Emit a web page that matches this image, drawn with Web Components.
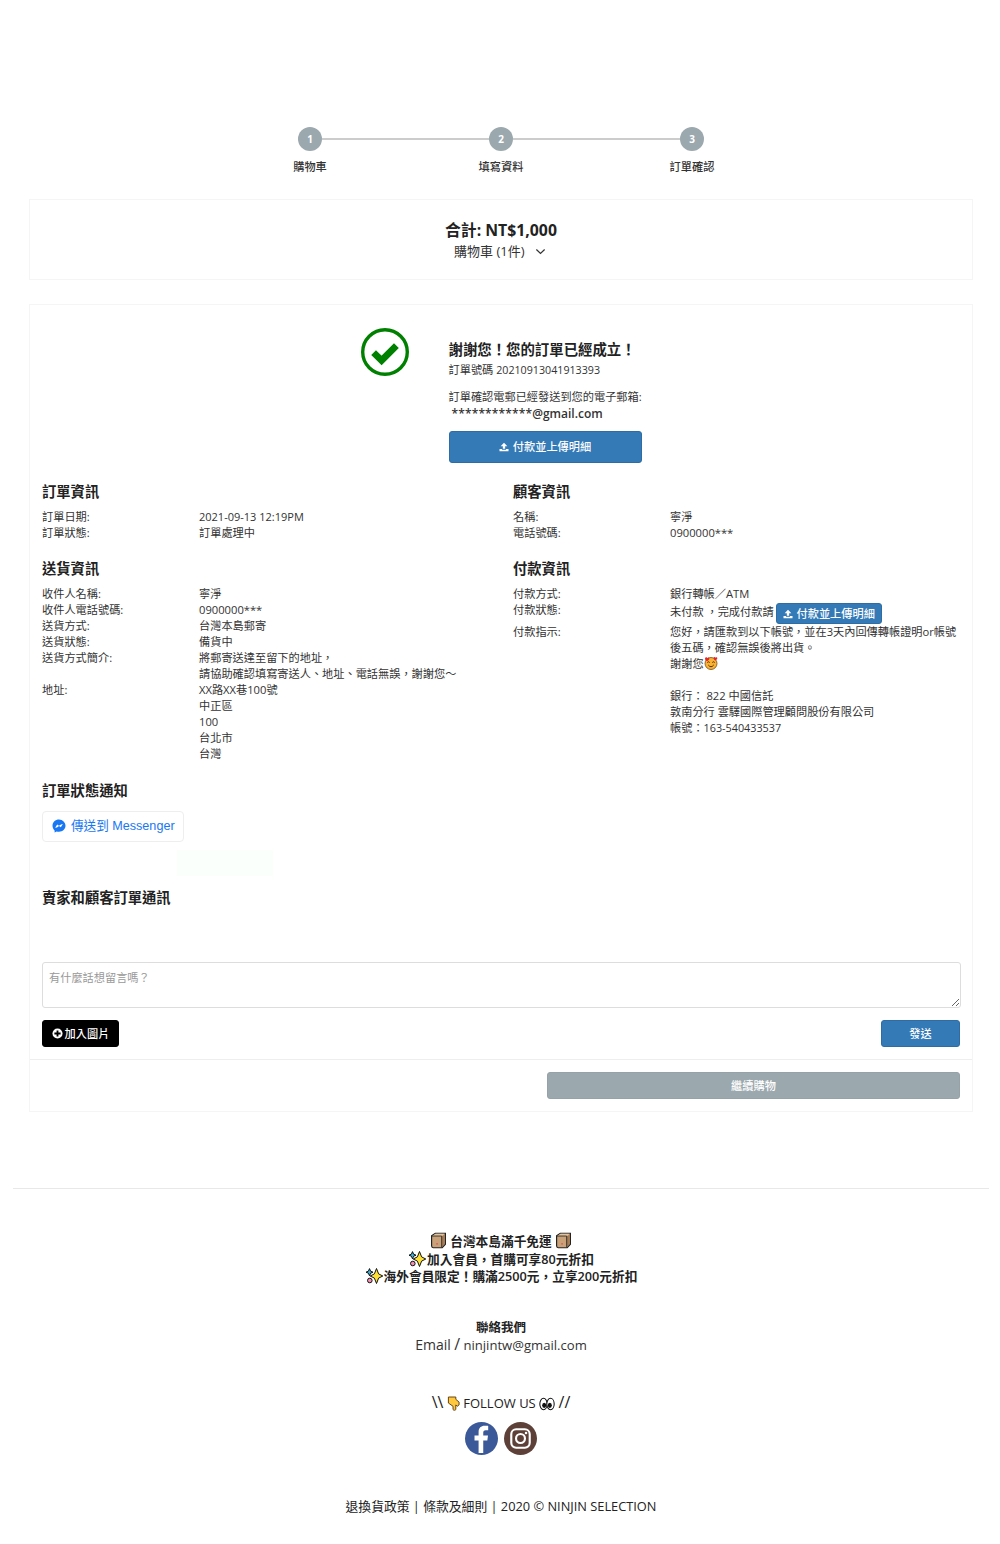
<!DOCTYPE html>
<html lang="zh-Hant">
<head>
<meta charset="utf-8">
<title>訂單確認</title>
<style>
  html, body { margin: 0; background: #fff; }
  body { font: 11.2px/16px "Open Sans", "Noto Sans CJK TC", sans-serif; color: #333; }
  .page { width: 944px; margin-left: 29px; }
  .spacer-foot { height: 76px; }
  .mid { height: 24px; }
  .latin { font-size: 11px; }
  .digits { font-size: 10.8px; }
</style>
</head>
<body>
<div class="page">
  <step-bar>
    <step-dot slot="dots" num="1"></step-dot>
    <step-dot slot="dots" num="2"></step-dot>
    <step-dot slot="dots" num="3"></step-dot>
    <span slot="labels">購物車</span>
    <span slot="labels">填寫資料</span>
    <span slot="labels">訂單確認</span>
  </step-bar>
  <cart-total></cart-total>
  <div class="mid"></div>
  <order-panel>
    <order-hero></order-hero>
    <info-grid>
      <info-block heading="訂單資訊">
        <info-row label="訂單日期:"><span class="latin">2021-09-13 12:19PM</span></info-row>
        <info-row label="訂單狀態:">訂單處理中</info-row>
      </info-block>
      <info-block heading="顧客資訊">
        <info-row label="名稱:">寧淨</info-row>
        <info-row label="電話號碼:">0900000***</info-row>
      </info-block>
      <info-block heading="送貨資訊">
        <info-row label="收件人名稱:">寧淨</info-row>
        <info-row label="收件人電話號碼:">0900000***</info-row>
        <info-row label="送貨方式:">台灣本島郵寄</info-row>
        <info-row label="送貨狀態:">備貨中</info-row>
        <info-row label="送貨方式簡介:">將郵寄送達至留下的地址，<br>請協助確認填寫寄送人、地址、電話無誤，謝謝您～</info-row>
        <info-row label="地址:">XX路XX巷100號<br>中正區<br>100<br>台北市<br>台灣</info-row>
      </info-block>
      <info-block heading="付款資訊">
        <info-row label="付款方式:">銀行轉帳／ATM</info-row>
        <info-row label="付款狀態:" tall>未付款 ，完成付款請 <app-button kind="blue" size="inline"><svg-icon name="upload" size="10"></svg-icon>付款並上傳明細</app-button></info-row>
        <info-row label="付款指示:">您好，請匯款到以下帳號，並在3天內回傳轉帳證明or帳號<br>後五碼，確認無誤後將出貨。<br>謝謝您<svg-icon name="hearts" size="14"></svg-icon><br><br>銀行： 822 中國信託<br>敦南分行 雲驛國際管理顧問股份有限公司<br>帳號：<span class="digits">163-540433537</span></info-row>
      </info-block>
    </info-grid>
    <notify-section></notify-section>
    <message-form></message-form>
    <panel-foot slot="foot"></panel-foot>
  </order-panel>
  <div class="spacer-foot"></div>
</div>
<site-footer></site-footer>

<script>
const fontStack = '"Open Sans", "Noto Sans CJK TC", sans-serif';

const icons = {
  upload: '<svg viewBox="0 0 12 12" width="100%" height="100%"><path fill="currentColor" d="M6 .8 10 5H7.400V8.200H4.600V5H2ZM.6 8.400H3.600V9.400H8.400V8.400H11.400V11.200H.6Z"/></svg>',
  plus: '<svg viewBox="0 0 12 12" width="100%" height="100%"><circle cx="6" cy="6" r="5.500" fill="currentColor"/><path fill="#000" d="M5 2.600H7V5H9.400V7H7V9.400H5V7H2.600V5H5Z"/></svg>',
  chevron: '<svg viewBox="0 0 12 12" width="100%" height="100%"><path fill="none" stroke="currentColor" stroke-width="1.300" d="M1.500 3.800 6 8.200 10.500 3.800"/></svg>',
  check: '<svg viewBox="0 0 48 48" width="100%" height="100%"><circle cx="24" cy="24" r="22.300" fill="none" stroke="#008000" stroke-width="3.400"/><path fill="none" stroke="#008000" stroke-width="6.800" d="M12.600 24.600 20.600 32.400 35.400 17.600"/></svg>',
  messenger: '<svg viewBox="0 0 14 14" width="100%" height="100%"><path fill="#1877f2" d="M7 .5C3.300.5.500 3.200.500 6.800c0 1.900.8 3.500 2.100 4.600v2.100l2-1.100c.7.2 1.500.3 2.400.3 3.700 0 6.500-2.700 6.500-5.900S10.700.5 7 .5Z"/><path fill="#fff" d="M3.100 8.700 5.200 5.400 7 6.800 9 5.400 10.900 5.100 8.800 8.300 7 7 5 8.400Z"/></svg>',
  box: '<svg viewBox="0 0 16 16" width="100%" height="100%"><path fill="#c9a27a" stroke="#222" stroke-width="1.100" d="M1.500 3.500 5 1.200H14.500V11.500L11.500 14.800H3C2 14.800 1.500 14 1.500 13Z"/><path fill="#e2c4a0" d="M2 3.700 5.200 1.700H13.800L10.800 3.900Z"/><path fill="#a67c55" d="M11 4.500 14 2V11.300L11 14.300Z"/><path fill="none" stroke="#222" stroke-width=".8" d="M1.800 3.800H11V14.500"/><rect x="6" y="10.500" width="1.300" height="1.300" fill="#d94a5a"/></svg>',
  sparkle: '<svg viewBox="0 0 18 16" width="100%" height="100%"><path fill="#ffe135" stroke="#111" stroke-width="1" d="M11.500 .5 13.600 5.900 17.800 8 13.600 10.100 11.500 15.500 9.400 10.100 5.200 8 9.400 5.900Z"/><path fill="#3fb3d9" stroke="#111" stroke-width="1" d="M4.500.6 5.600 3.200 8 4.200 5.600 5.200 4.500 7.800 3.400 5.200 1 4.200 3.400 3.200Z"/><circle cx="4.800" cy="12.500" r="2.300" fill="#f48fb1" stroke="#111" stroke-width="1"/></svg>',
  hand: '<svg viewBox="0 0 14 16" width="100%" height="100%"><path fill="#ffc83d" stroke="#5b3a10" stroke-width="1" d="M1.500 1H9.500V3.500L13 6.500V9.500L11 11 9.500 9.500V14.500C9 15.500 7 15.500 6.500 14.500V11L1.500 7.500Z"/></svg>',
  eyes: '<svg viewBox="0 0 18 16" width="100%" height="100%"><ellipse cx="5" cy="8" rx="4.200" ry="6.500" fill="#fff" stroke="#111" stroke-width="1.200"/><ellipse cx="13" cy="8" rx="4.200" ry="6.500" fill="#fff" stroke="#111" stroke-width="1.200"/><ellipse cx="5.800" cy="9.500" rx="2.300" ry="3" fill="#111"/><ellipse cx="12.200" cy="9.500" rx="2.300" ry="3" fill="#111"/></svg>',
  hearts: '<svg viewBox="0 0 14 14" width="100%" height="100%"><circle cx="7" cy="7.500" r="6" fill="#f9b233" stroke="#7a4a12" stroke-width=".8"/><path fill="none" stroke="#4a2c0a" stroke-width="1" d="M3.300 6.500Q4.500 5 5.700 6.500M8.300 6.500Q9.500 5 10.700 6.500M4.300 9Q7 12.500 9.700 9"/><path fill="#e5252a" d="M1 2.500C1.500.8 3.200 1 3.400 2.300 3.800 1 5.500 1.200 5.300 3 5 4 3.800 4.800 3.200 5.200 2 4.700 1 3.800 1 2.500ZM9.500 2C9.800.8 11.300.8 11.500 1.800 12 .9 13.500 1.200 13.300 2.600 13 3.500 12 4.200 11.400 4.500 10.500 4 9.500 3.200 9.500 2Z"/></svg>',
  facebook: '<svg viewBox="0 0 34 34" width="100%" height="100%"><circle cx="17" cy="17" r="17" fill="#3b5998"/><path fill="#fff" d="M18.800 32V19H23L23.700 14H18.800V11C18.800 9.500 19.400 8.500 21.300 8.500H23.900V4.100C23.400 4 21.900 3.900 20.200 3.900 16.500 3.900 14 6.100 14 10.300V14H9.800V19H14V32Z"/></svg>',
  instagram: '<svg viewBox="0 0 34 34" width="100%" height="100%"><circle cx="17" cy="17" r="17" fill="#5d4037"/><rect x="7.500" y="7.500" width="19" height="19" rx="5" fill="none" stroke="#fff" stroke-width="2.200"/><circle cx="17" cy="17" r="4.600" fill="none" stroke="#fff" stroke-width="2.200"/><circle cx="22.700" cy="11.300" r="1.300" fill="#fff"/></svg>'
};

class SvgIcon extends HTMLElement {
  constructor() {
    super();
    this.attachShadow({ mode: "open" });
  }
  connectedCallback() {
    const size = this.getAttribute("size") || 12;
    const width = this.getAttribute("width") || size;
    this.shadowRoot.innerHTML = `<style>
      :host { display: inline-block; width: ${width}px; height: ${size}px; vertical-align: -2px; }
      svg { display: block; }
    </style>` + icons[this.getAttribute("name")];
  }
}
customElements.define("svg-icon", SvgIcon);

class StepDot extends HTMLElement {
  constructor() {
    super();
    this.attachShadow({ mode: "open" });
    this.shadowRoot.innerHTML = `<style>
      :host { display: flex; align-items: center; justify-content: center; width: 24px; height: 24px;
        border-radius: 50%; background: #9ba8ae; color: #fff; font: 700 10px/24px ${fontStack}; flex: none; }
    </style><span></span>`;
  }
  connectedCallback() {
    this.shadowRoot.querySelector("span").textContent = this.getAttribute("num");
  }
}
customElements.define("step-dot", StepDot);

class StepBar extends HTMLElement {
  constructor() {
    super();
    this.attachShadow({ mode: "open" });
    this.shadowRoot.innerHTML = `<style>
      :host { display: block; padding: 127px 0 24px; }
      .dots { display: flex; width: 406px; margin-left: 269px; }
      .line { flex: 1; height: 2px; background: #ccc; align-self: center; }
      .labels { display: grid; grid-template-columns: repeat(3, 84px); justify-content: space-between;
        width: 466px; margin: 0 0 0 239px; padding-top: 8px; text-align: center;
        font: 500 11.200px/16px ${fontStack}; color: #333; }
    </style>
    <div class="dots"></div>
    <div class="labels"><slot name="labels"></slot></div>`;
  }
  connectedCallback() {
    // put a connecting line between the dots
    const dots = [...this.querySelectorAll("step-dot")];
    const box = this.shadowRoot.querySelector(".dots");
    dots.forEach((dot, i) => {
      const s = document.createElement("slot");
      s.name = "dot" + i;
      dot.slot = "dot" + i;
      box.appendChild(s);
      if (i < dots.length - 1) {
        const line = document.createElement("div");
        line.className = "line";
        box.appendChild(line);
      }
    });
  }
}
customElements.define("step-bar", StepBar);

class CartTotal extends HTMLElement {
  constructor() {
    super();
    this.attachShadow({ mode: "open" });
    this.shadowRoot.innerHTML = `<style>
      :host { display: block; border: 1px solid #f5f5f5; height: 79px; text-align: center; color: #222; }
      .sum { font: 700 15.800px/22px ${fontStack}; padding-top: 19px; }
      .cart { font: 400 13px/20px ${fontStack}; color: #333; padding-right: 2px; }
      svg-icon { margin-left: 7px; color: #333; vertical-align: -1px; }
    </style>
    <div class="sum">合計: NT$1,000</div>
    <div class="cart">購物車 (1件) <svg-icon name="chevron" size="11"></svg-icon></div>`;
  }
}
customElements.define("cart-total", CartTotal);

class OrderPanel extends HTMLElement {
  constructor() {
    super();
    this.attachShadow({ mode: "open" });
    this.shadowRoot.innerHTML = `<style>
      :host { display: block; border: 1px solid #f5f5f5; }
      .body { padding: 23px 12px 12px; }
    </style>
    <div class="body"><slot></slot></div>
    <slot name="foot"></slot>`;
  }
}
customElements.define("order-panel", OrderPanel);

class AppButton extends HTMLElement {
  constructor() {
    super();
    this.attachShadow({ mode: "open" });
    this.shadowRoot.innerHTML = `<style>
      :host { display: inline-flex; align-items: center; justify-content: center; gap: 4px; box-sizing: border-box;
        border: 1px solid transparent; border-radius: 3px; color: #fff; height: 27px;
        font: 500 11.200px/16px ${fontStack}; }
      :host([kind=blue]) { background: #337ab7; border-color: #2e6da4; }
      :host([kind=black]) { background: #000; border-color: #000; }
      :host([kind=gray]) { background: #9ba8ad; border-color: #95a2a7; }
      :host([size=inline]) { height: 21px; margin: -1px 0 0 -1px; padding: 0 6px; vertical-align: top; }
      :host([size=wide]) { display: flex; width: 100%; height: 32px; }
    </style><slot></slot>`;
  }
}
customElements.define("app-button", AppButton);

class OrderHero extends HTMLElement {
  constructor() {
    super();
    this.attachShadow({ mode: "open" });
    this.shadowRoot.innerHTML = `<style>
      :host { display: flex; justify-content: center; gap: 40px; }
      .check { width: 48px; height: 48px; }
      .text { width: 193px; padding-top: 12px; }
      h2 { margin: 0 0 2px; font: 700 14.400px/20px ${fontStack}; color: #222; white-space: nowrap; }
      p { margin: 0; font: 400 11.200px/16px ${fontStack}; white-space: nowrap; }
      .num { font-size: 10.700px; }
      .mail { font-weight: 600; font-size: 12px; padding-left: 3px; margin-top: 1px; color: #333; }
      .stars { letter-spacing: .15px; }
      .gap { height: 11px; }
      app-button { margin-top: 9px; }
    </style>
    <svg-icon class="check" name="check" size="48"></svg-icon>
    <div class="text">
      <h2>謝謝您！您的訂單已經成立！</h2>
      <p>訂單號碼 <span class="num">20210913041913393</span></p>
      <div class="gap"></div>
      <p>訂單確認電郵已經發送到您的電子郵箱:</p>
      <p class="mail"><span class="stars">************</span>@gmail.com</p>
      <app-button kind="blue" size="wide"><svg-icon name="upload" size="10"></svg-icon>付款並上傳明細</app-button>
    </div>`;
  }
}
customElements.define("order-hero", OrderHero);

class InfoGrid extends HTMLElement {
  constructor() {
    super();
    this.attachShadow({ mode: "open" });
    this.shadowRoot.innerHTML = `<style>
      :host { display: grid; grid-template-columns: 447px 447px; column-gap: 24px; row-gap: 18px; margin-top: 19px; }
    </style><slot></slot>`;
  }
}
customElements.define("info-grid", InfoGrid);

class InfoBlock extends HTMLElement {
  constructor() {
    super();
    this.attachShadow({ mode: "open" });
    this.shadowRoot.innerHTML = `<style>
      :host { display: block; }
      h3 { margin: 0 0 7px; font: 700 14.300px/20px ${fontStack}; color: #222; }
    </style><h3></h3><slot></slot>`;
  }
  connectedCallback() {
    this.shadowRoot.querySelector("h3").textContent = this.getAttribute("heading");
  }
}
customElements.define("info-block", InfoBlock);

class InfoRow extends HTMLElement {
  constructor() {
    super();
    this.attachShadow({ mode: "open" });
    this.shadowRoot.innerHTML = `<style>
      :host { display: grid; grid-template-columns: 157px 1fr; font: 400 11.200px/16px ${fontStack}; color: #333; }
      :host([tall]) { height: 22px; }
      .val { white-space: nowrap; }
      :host([tall]) .val { margin-top: 2px; }
    </style><div class="lab"></div><div class="val"><slot></slot></div>`;
  }
  connectedCallback() {
    this.shadowRoot.querySelector(".lab").textContent = this.getAttribute("label");
  }
}
customElements.define("info-row", InfoRow);

class NotifySection extends HTMLElement {
  constructor() {
    super();
    this.attachShadow({ mode: "open" });
    this.shadowRoot.innerHTML = `<style>
      :host { display: block; margin-top: 19px; }
      h3 { margin: 0; font: 700 14.300px/20px ${fontStack}; color: #222; }
      .msg { display: inline-flex; align-items: center; gap: 5px; box-sizing: border-box; height: 31px; margin-top: 10px; padding: 0 8px 2px 9px;
        border: 1px solid #eee; border-radius: 4px; color: #1877f2;
        font: 400 12.600px/16px "Liberation Sans", "Noto Sans CJK TC", sans-serif; vertical-align: top; }
      .tint { width: 96px; height: 26px; margin: 8px 0 0 135px; background: #fbfffb; }
      h3.next { margin-top: 12px; }
      svg-icon { vertical-align: middle; }
    </style>
    <h3>訂單狀態通知</h3>
    <div class="msg"><svg-icon name="messenger" size="14"></svg-icon>傳送到 Messenger</div>
    <div class="tint"></div>
    <h3 class="next">賣家和顧客訂單通訊</h3>`;
  }
}
customElements.define("notify-section", NotifySection);

class MessageForm extends HTMLElement {
  constructor() {
    super();
    this.attachShadow({ mode: "open" });
    this.shadowRoot.innerHTML = `<style>
      :host { display: block; margin-top: 54px; }
      textarea { display: block; box-sizing: border-box; width: 919px; height: 46px; padding: 7px 6px; margin: 0;
        border: 1px solid #ddd; border-radius: 3px; outline: 0; background: #fff;
        font: 400 11.200px/16px ${fontStack}; color: #333; }
      textarea::placeholder { color: #999; }
      .row { display: flex; justify-content: space-between; margin-top: 12px; }
      .add { width: 77px; gap: 2px; }
      .send { width: 79px; }
      svg-icon { color: #fff; }
    </style>
    <textarea placeholder="有什麼話想留言嗎？"></textarea>
    <div class="row">
      <app-button class="add" kind="black"><svg-icon name="plus" size="11"></svg-icon>加入圖片</app-button>
      <app-button class="send" kind="blue">發送</app-button>
    </div>`;
  }
}
customElements.define("message-form", MessageForm);

class PanelFoot extends HTMLElement {
  constructor() {
    super();
    this.attachShadow({ mode: "open" });
    this.shadowRoot.innerHTML = `<style>
      :host { display: flex; justify-content: flex-end; border-top: 1px solid #eee; padding: 12px 12px 12px 0; }
      app-button { width: 413px; }
    </style><app-button kind="gray">繼續購物</app-button>`;
  }
}
customElements.define("panel-foot", PanelFoot);

class SiteFooter extends HTMLElement {
  constructor() {
    super();
    this.attachShadow({ mode: "open" });
    this.shadowRoot.innerHTML = `<style>
      :host { display: block; width: 976px; margin-left: 13px; border-top: 1px solid #e8e8e8; text-align: center; color: #222; font-family: ${fontStack}; }
      .promo { padding-top: 43px; font: 600 12.700px/17.500px ${fontStack}; }
      .promo svg-icon[name=sparkle] { margin-right: 1px; }
      .contact { margin-top: 33px; font: 600 12.500px/18px ${fontStack}; }
      .email { font: 400 13.100px/18px ${fontStack}; color: #333; margin-top: -2px; }
      .email .em { font-size: 14px; }
      .email .sl { font-size: 16px; }
      .follow { margin-top: 38px; font: 400 13px/20px ${fontStack}; }
      .slash { font-size: 16px; }
      .social { display: flex; justify-content: center; gap: 6px; margin-top: 9px; padding-right: 1px; }
      .legal { margin-top: 42px; padding-bottom: 30px; font: 400 12.800px/18px ${fontStack}; }
      svg-icon { vertical-align: -3px; }
    </style>
    <div class="promo">
      <div><svg-icon name="box" size="17"></svg-icon> 台灣本島滿千免運 <svg-icon name="box" size="17"></svg-icon></div>
      <div><svg-icon name="sparkle" size="16" width="18"></svg-icon>加入會員，首購可享80元折扣</div>
      <div><svg-icon name="sparkle" size="16" width="18"></svg-icon>海外會員限定！購滿2500元，立享200元折扣</div>
    </div>
    <div class="contact">
      <div>聯絡我們</div>
      <div class="email"><span class="em">Email</span> <span class="sl">/</span> ninjintw@gmail.com</div>
    </div>
    <div class="follow"><span class="slash">\\\\</span> <svg-icon name="hand" size="15" width="13"></svg-icon> FOLLOW US <svg-icon name="eyes" size="14" width="16"></svg-icon> <span class="slash">//</span></div>
    <div class="social">
      <svg-icon name="facebook" size="33"></svg-icon>
      <svg-icon name="instagram" size="33"></svg-icon>
    </div>
    <div class="legal">退換貨政策 | 條款及細則 | 2020 © NINJIN SELECTION</div>`;
  }
}
customElements.define("site-footer", SiteFooter);
</script>
</body>
</html>
